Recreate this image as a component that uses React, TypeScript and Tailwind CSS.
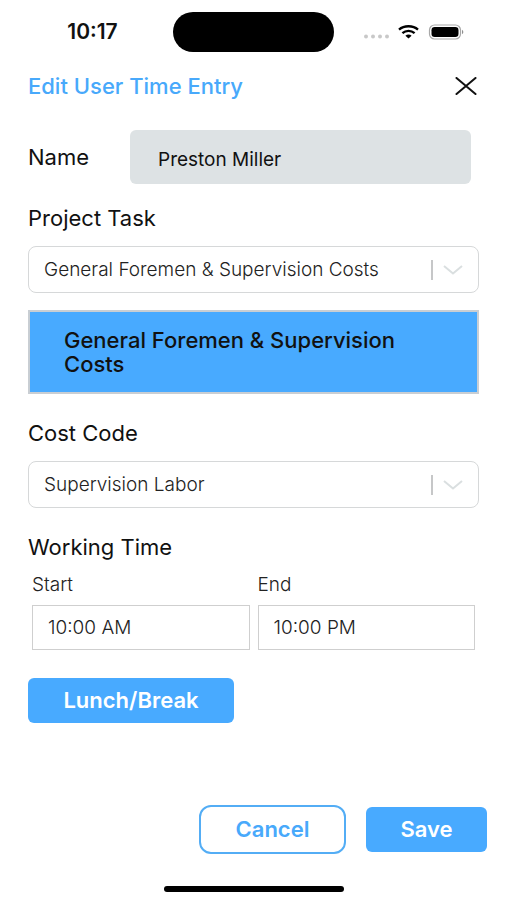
import React, { useState } from "react";

const projectTasks = ["General Foremen & Supervision Costs"];
const costCodes = ["Supervision Labor"];

const StatusBar = () => {
  return (
    <div className="grid grid-cols-[1fr_161px_1fr] items-center pt-3">
      <span className="justify-self-center pl-3 text-[21px] font-semibold leading-6">
        10:17
      </span>
      <div className="h-10 rounded-full bg-black" />
      <div className="flex items-center gap-2 pl-7">
        <svg width="28" height="16" viewBox="0 0 28 16" fill="#c8c8c8">
          <circle cx="4" cy="12.5" r="2" />
          <circle cx="11" cy="12.5" r="2" />
          <circle cx="18" cy="12.5" r="2" />
          <circle cx="25" cy="12.5" r="2" />
        </svg>
        <svg
          width="21"
          height="14"
          viewBox="0 0 21 14"
          fill="none"
          stroke="#000"
          strokeWidth="2.3"
        >
          <path d="M1 4.6C6 .1 15 .1 20 4.6" />
          <path d="M4.4 8.2C8 5 13 5 16.6 8.2" />
          <path
            d="M7.4 10.8c1.8-1.7 4.4-1.7 6.2 0l-3.1 2.7z"
            fill="#000"
            stroke="none"
          />
        </svg>
        <svg width="37" height="16" viewBox="0 0 37 16">
          <rect
            x="2.5"
            y="1"
            width="31"
            height="14"
            rx="5"
            fill="none"
            stroke="#a8a8a8"
            strokeWidth="1.2"
          />
          <rect x="4.5" y="3" width="27" height="10" rx="3.2" />
          <path d="M35 5.8c1.8.8 1.8 3.6 0 4.4z" fill="#8f8f8f" />
        </svg>
      </div>
    </div>
  );
};

type SelectFieldProps = {
  id: string;
  label: string;
  options: string[];
};

const SelectField = ({ id, label, options }: SelectFieldProps) => {
  return (
    <div>
      <label htmlFor={id} className="block text-[22px] leading-7">
        {label}
      </label>
      <div className="relative mt-3.5">
        <select
          id={id}
          className="block h-[47px] w-full appearance-none rounded-lg border border-[#d6d8d9] bg-white pl-[15px] pr-14 pt-0.5 text-[19px] font-light text-[#222]"
        >
          {options.map((option) => (
            <option key={option}>{option}</option>
          ))}
        </select>
        <div className="pointer-events-none absolute inset-y-0 right-4 flex items-center gap-2.5">
          <span className="h-5 w-[2px] bg-[#c6c7c8]" />
          <svg
            width="20"
            height="12"
            viewBox="0 0 20 12"
            fill="none"
            stroke="#dadfe0"
            strokeWidth="2"
          >
            <path d="M1 2l9 7.5L19 2" />
          </svg>
        </div>
      </div>
    </div>
  );
};

type TimeFieldProps = {
  id: string;
  label: string;
  initial: string;
};

const TimeField = ({ id, label, initial }: TimeFieldProps) => {
  const [value, setValue] = useState(initial);

  return (
    <div className="min-w-0 flex-1">
      <label
        htmlFor={id}
        className="block text-[19px] font-light leading-6 text-[#222]"
      >
        {label}
      </label>
      <input
        id={id}
        type="text"
        value={value}
        onChange={(e) => setValue(e.target.value)}
        className="mt-2 block h-[45px] w-full border border-[#cfcfcf] px-[15px] text-[19px] font-light text-[#222]"
      />
    </div>
  );
};

const App = () => {
  return (
    <div className="flex min-h-screen flex-col bg-white font-['Inter','Liberation_Sans',sans-serif] text-[#111]">
      <StatusBar />

      <header className="mt-5 flex items-center justify-between pl-7 pr-[30px]">
        <h1 className="text-[22px] font-medium leading-7 text-[#48a9fb]">
          Edit User Time Entry
        </h1>
        <button type="button" aria-label="Close">
          <svg
            width="22"
            height="18"
            viewBox="0 0 22 18"
            fill="none"
            stroke="#111"
            strokeWidth="2"
            strokeLinecap="round"
          >
            <path d="M1.5 1l19 16M20.5 1l-19 16" />
          </svg>
        </button>
      </header>

      <main className="px-7 pt-[30px]">
        <div className="flex items-center pr-2">
          <label
            htmlFor="name"
            className="w-[102px] shrink-0 text-[22px] leading-7"
          >
            Name
          </label>
          <input
            id="name"
            type="text"
            readOnly
            value="Preston Miller"
            className="h-[54px] w-full min-w-0 rounded-md bg-[#dde2e4] px-7 pt-1 text-[19px]"
          />
        </div>

        <div className="mt-5">
          <SelectField
            id="project-task"
            label="Project Task"
            options={projectTasks}
          />
        </div>

        <div className="mt-[17px] border-2 border-[#c9ced3] bg-[#48aaff] py-4 pl-[34px] pr-12 text-[22px] font-medium leading-6">
          General Foremen & Supervision Costs
        </div>

        <div className="mt-[25px]">
          <SelectField id="cost-code" label="Cost Code" options={costCodes} />
        </div>

        <h2 className="mt-[25px] text-[22px] leading-7">Working Time</h2>
        <div className="mt-3 flex gap-2 px-1">
          <TimeField id="start" label="Start" initial="10:00 AM" />
          <TimeField id="end" label="End" initial="10:00 PM" />
        </div>

        <button
          type="button"
          className="mt-7 h-[45px] w-[206px] rounded-md bg-[#48aaff] text-[22px] font-semibold text-white"
        >
          Lunch/Break
        </button>
      </main>

      <footer className="mt-auto pt-8">
        <div className="flex items-center justify-end gap-5 pr-5">
          <button
            type="button"
            className="h-[49px] w-[147px] rounded-xl border-2 border-[#53adf5] text-[22px] font-semibold text-[#48a9fb]"
          >
            Cancel
          </button>
          <button
            type="button"
            className="h-[45px] w-[121px] rounded-md bg-[#48aaff] text-[22px] font-semibold text-white"
          >
            Save
          </button>
        </div>
        <div className="mx-auto mt-8 mb-2 h-1.5 w-[180px] rounded-full bg-black" />
      </footer>
    </div>
  );
};

export default App;
